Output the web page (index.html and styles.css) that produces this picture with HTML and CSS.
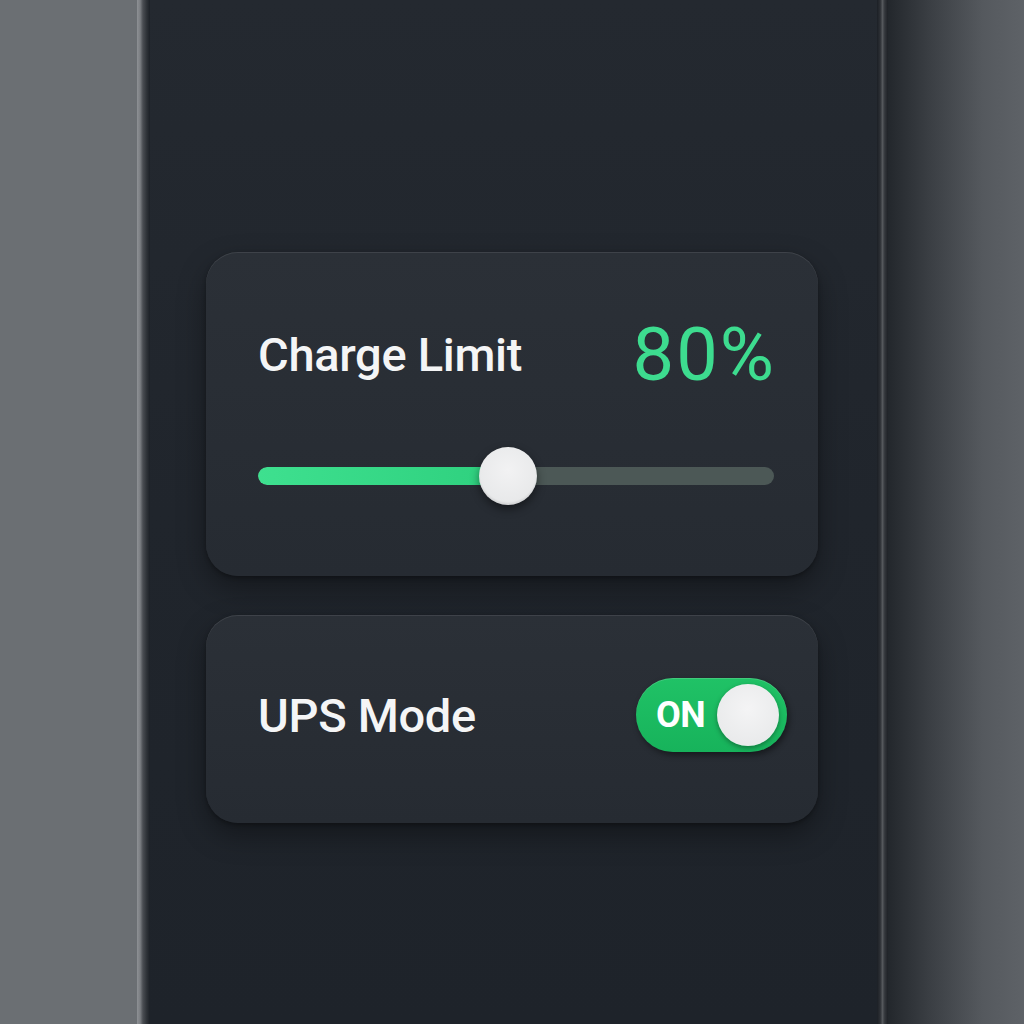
FILE: index.html
```html
<!DOCTYPE html>
<html lang="en">
<head>
<meta charset="utf-8">
<title>Battery Settings</title>
<link rel="stylesheet" href="styles.css">
</head>
<body>
<div class="scene">
  <div class="side side-left"></div>
  <div class="phone">
    <div class="bezel bezel-left"></div>
    <div class="screen">
      <section class="card card-charge">
        <div class="card-head">
          <span class="label">Charge Limit</span>
          <span class="value">80%</span>
        </div>
        <div class="slider">
          <div class="track">
            <div class="fill" style="width: 45%"></div>
          </div>
          <div class="thumb" style="left: 45%"></div>
        </div>
      </section>
      <section class="card card-ups">
        <span class="label">UPS Mode</span>
        <div class="toggle">
          <span class="toggle-text">ON</span>
          <span class="knob"></span>
        </div>
      </section>
    </div>
    <div class="bezel bezel-right"></div>
  </div>
  <div class="side side-right"></div>
</div>
</body>
</html>
```
FILE: styles.css
```css
html, body {
  margin: 0;
  padding: 0;
  height: 100%;
}
body {
  background: #6b6f73;
  font-family: Roboto, "Noto Sans", Arial, sans-serif;
  overflow: hidden;
}
.scene {
  display: flex;
  height: 1024px;
  width: 1024px;
}
.side-left {
  width: 137px;
  flex: none;
  background: #6b6f73;
}
.side-right {
  flex: 1;
  background: linear-gradient(90deg, #23272c 0%, #3a3e43 30%, #55595e 70%, #5e6267 100%);
}
.phone {
  display: flex;
  flex: none;
  width: 751px;
}
.bezel-left {
  width: 13px;
  flex: none;
  background: linear-gradient(90deg, #8e9195 0%, #7a7d81 25%, #4a4d52 45%, #2e3237 75%, #1c2026 100%);
}
.bezel-right {
  width: 11px;
  flex: none;
  background: linear-gradient(90deg, #1b1f25 0%, #2e3136 30%, #55585c 50%, #34373c 70%, #1e2126 100%);
}
.screen {
  flex: 1;
  background: linear-gradient(180deg, #242930 0%, #20252c 50%, #1e232a 100%);
  padding: 252px 59px 0 56px;
  box-sizing: border-box;
  display: flex;
  flex-direction: column;
  gap: 39px;
}
.card {
  background: linear-gradient(180deg, #2b3037 0%, #262b32 100%);
  border-radius: 32px;
  box-shadow: inset 0 1px 0 rgba(255,255,255,0.09), 0 12px 28px rgba(0,0,0,0.35), 0 2px 4px rgba(0,0,0,0.3);
  box-sizing: border-box;
}
.card-charge {
  height: 324px;
  padding: 62px 44px 0 52px;
}
.card-head {
  display: flex;
  justify-content: space-between;
  align-items: center;
  height: 80px;
}
.label {
  color: #f4f5f6;
  font-size: 47px;
  font-weight: 500;
  letter-spacing: -0.3px;
}
.value {
  color: #3ddc8f;
  font-size: 74px;
  font-weight: 400;
  letter-spacing: 2px;
  margin-right: -2px;
}
.slider {
  position: relative;
  margin-top: 52px;
  height: 60px;
  display: flex;
  align-items: center;
}
.track {
  flex: 1;
  height: 18px;
  border-radius: 9px;
  background: #4c5856;
  overflow: hidden;
}
.fill {
  height: 100%;
  border-radius: 9px;
  background: linear-gradient(90deg, #3ee08f, #2fd17f);
}
.thumb {
  position: absolute;
  top: 1px;
  width: 58px;
  height: 58px;
  margin-left: -11px;
  border-radius: 50%;
  background: radial-gradient(circle at 50% 40%, #f2f2f3 0%, #e8e9ea 70%, #d8d9da 100%);
  box-shadow: 0 4px 10px rgba(0,0,0,0.45), inset 0 -2px 2px rgba(0,0,0,0.08);
}
.card-ups {
  height: 208px;
  padding: 0 31px 8px 52px;
  display: flex;
  align-items: center;
  justify-content: space-between;
}
.toggle {
  width: 151px;
  height: 74px;
  border-radius: 37px;
  background: linear-gradient(180deg, #20c266 0%, #17b35b 100%);
  box-shadow: 2px 3px 6px rgba(0,0,0,0.45), inset 0 1px 0 rgba(255,255,255,0.15);
  box-sizing: border-box;
  padding: 0 8px 0 20px;
  display: flex;
  align-items: center;
  justify-content: space-between;
}
.toggle-text {
  color: #ffffff;
  font-size: 36px;
  font-weight: 700;
  letter-spacing: -0.5px;
}
.knob {
  width: 62px;
  height: 62px;
  border-radius: 50%;
  background: radial-gradient(circle at 50% 40%, #f4f4f5 0%, #e9eaeb 75%, #dcdddf 100%);
  box-shadow: 0 2px 5px rgba(0,0,0,0.35);
}
```
